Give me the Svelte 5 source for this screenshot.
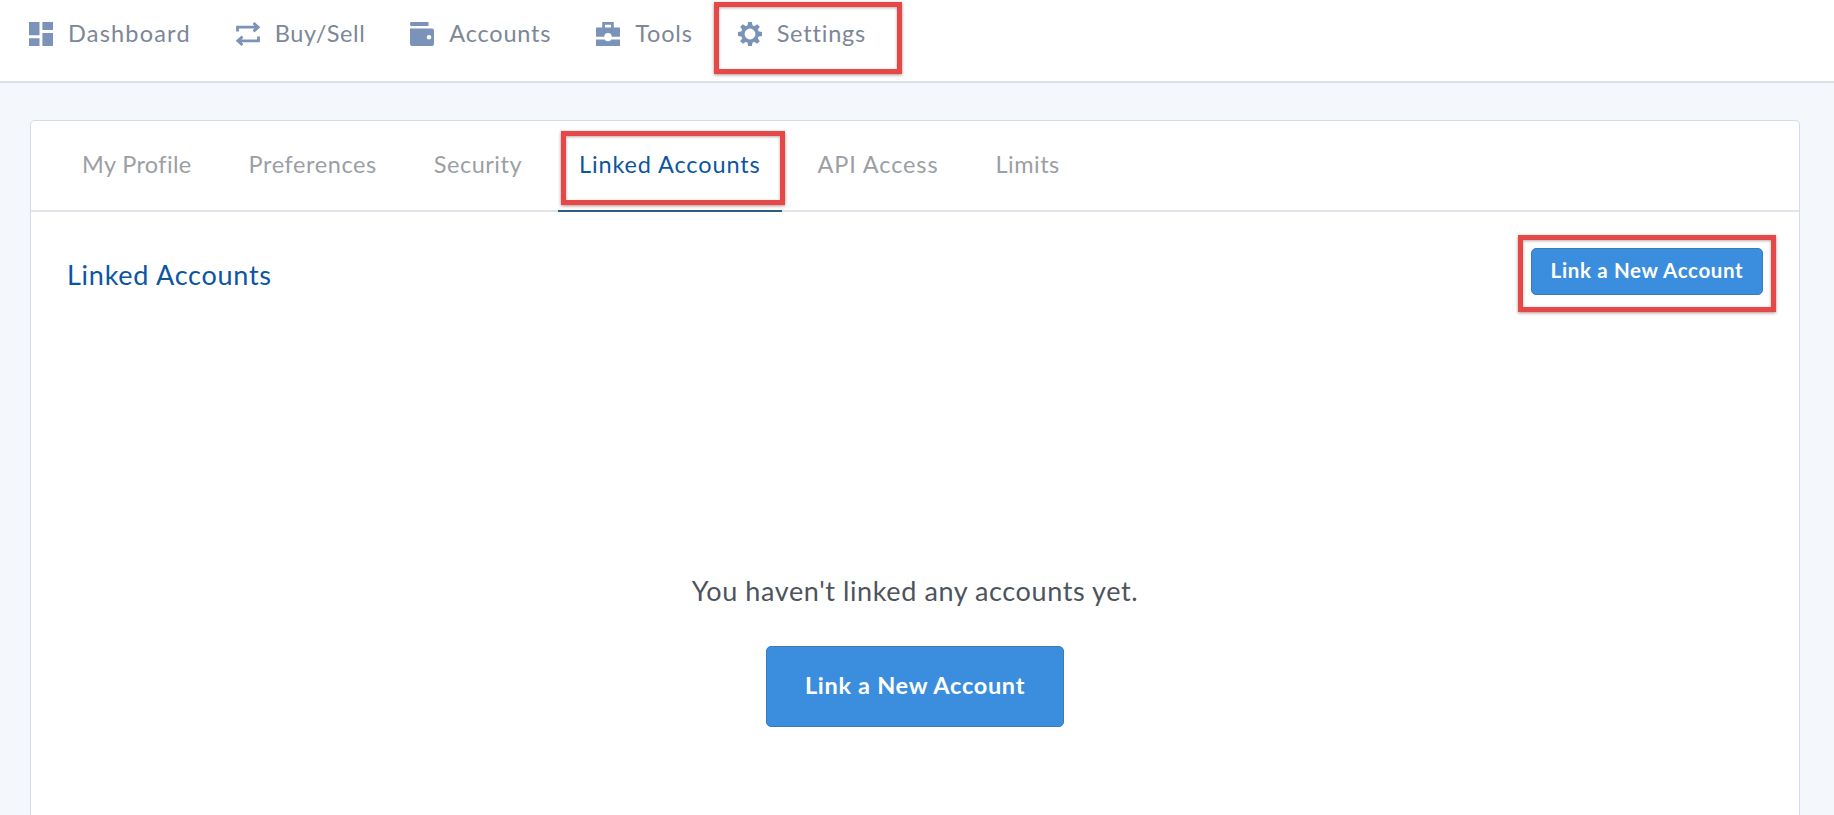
<script lang="ts">
  interface NavItem {
    id: string;
    label: string;
  }

  const navItems: NavItem[] = [
    { id: 'dashboard', label: 'Dashboard' },
    { id: 'trade', label: 'Buy/Sell' },
    { id: 'accounts', label: 'Accounts' },
    { id: 'tools', label: 'Tools' },
    { id: 'settings', label: 'Settings' }
  ];

  const tabs = ['My Profile', 'Preferences', 'Security', 'Linked Accounts', 'API Access', 'Limits'];

  // One gear tooth is drawn per angle
  const toothAngles = [0, 45, 90, 135, 180, 225, 270, 315];

  let activeTab = 'Linked Accounts';
</script>

<div class="page">
  <nav class="topbar">
    {#each navItems as item}
      <a class="nav-item {item.id}" href="#{item.id}">
        <svg class="nav-icon" viewBox="0 0 24 24" fill="currentColor">
          {#if item.id === 'dashboard'}
            <path d="M0 0h10.5v13.2H0zM13.4 0H24v8H13.4zM0 16.2h10.5V24H0zM13.4 11H24v13H13.4z" />
          {:else if item.id === 'trade'}
            <path
              d="M1.5 9.5V5.2H22M17.5 1l4.7 4.2-4.7 4.2M22.5 14.5v4.3H2M6.5 14.6l-4.7 4.2L6.5 23"
              fill="none"
              stroke="currentColor"
              stroke-width="2.8"
            />
          {:else if item.id === 'accounts'}
            <path d="M1 0h17.5v4H1q-1 0-1-2t1-2z" />
            <path
              fill-rule="evenodd"
              d="M0 6.6h22q2 0 2 2V22q0 2-2 2H2q-2 0-2-2zM19 13a2.3 2.3 0 1 0 0 4.6 2.3 2.3 0 0 0 0-4.6z"
            />
          {:else if item.id === 'tools'}
            <path
              fill-rule="evenodd"
              d="M6.2 0h11.6v5.6H24v9.2h-8.2a3.8 3.8 0 0 0-7.6 0H0V5.6h6.2zM9 2.8v2.8h6V2.8z"
            />
            <path d="M0 17.4h8.7a3.8 3.8 0 0 0 6.6 0H24V24H0z" />
          {:else}
            <circle cx="12" cy="12" r="7.2" fill="none" stroke="currentColor" stroke-width="3.6" />
            {#each toothAngles as angle}
              <path d="M9.3 4.5L10.1 0h3.8l.8 4.5z" transform="rotate({angle} 12 12)" />
            {/each}
          {/if}
        </svg>
        <span class="nav-label">{item.label}</span>
        {#if item.id === 'settings'}
          <span class="highlight highlight-nav"></span>
        {/if}
      </a>
    {/each}
  </nav>

  <main class="card">
    <div class="tabs">
      {#each tabs as tab}
        <button type="button" class="tab" class:active={tab === activeTab} on:click={() => (activeTab = tab)}>
          {tab}
          {#if tab === 'Linked Accounts'}
            <span class="highlight highlight-tab"></span>
          {/if}
        </button>
      {/each}
    </div>

    <header class="section-header">
      <h1>Linked Accounts</h1>
      <button type="button" class="btn btn-small">
        Link a New Account
        <span class="highlight highlight-btn"></span>
      </button>
    </header>

    <section class="empty-state">
      <p>You haven't linked any accounts yet.</p>
      <button type="button" class="btn btn-large">Link a New Account</button>
    </section>
  </main>
</div>

<style>
  :global(body) {
    margin: 0;
    background: #f4f7fc;
  }

  .page {
    height: 815px;
    display: flex;
    flex-direction: column;
    overflow: hidden;
    font-family: Lato, 'Open Sans', sans-serif;
  }

  .page * {
    box-sizing: border-box;
  }

  button {
    font-family: inherit;
    cursor: pointer;
  }

  /* Top navigation */
  .topbar {
    display: flex;
    flex-shrink: 0;
    gap: 45px;
    height: 83px;
    padding: 0 29px;
    background: #fff;
    border-bottom: 2px solid #dae1e9;
  }

  .nav-item {
    position: relative;
    display: flex;
    align-items: center;
    gap: 15px;
    height: 67px;
    color: #7c8798;
    font-size: 23.5px;
    letter-spacing: 0.8px;
    white-space: nowrap;
    text-decoration: none;
  }

  .nav-item.dashboard {
    letter-spacing: 1.2px;
  }

  .nav-item.trade {
    letter-spacing: 0.55px;
  }

  .nav-label {
    padding-bottom: 2px;
  }

  .nav-icon {
    width: 24px;
    height: 24px;
    flex-shrink: 0;
    color: #7b93b8;
  }

  /* Card and tabs */
  .card {
    display: flex;
    flex-direction: column;
    flex: 1;
    margin: 37px 34px 0 30px;
    background: #fff;
    border: 1px solid #d3dce7;
    border-bottom: none;
    border-radius: 5px 5px 0 0;
  }

  .tabs {
    display: flex;
    gap: 15px;
    height: 91px;
    padding-left: 30px;
    border-bottom: 2px solid #e1e4e8;
  }

  .tab {
    position: relative;
    height: 91px;
    padding: 0 21px 3px;
    border: none;
    border-bottom: 2px solid transparent;
    background: none;
    color: #9b9fa4;
    font-size: 23.5px;
    letter-spacing: 0.5px;
    white-space: nowrap;
  }

  .tab:first-child {
    letter-spacing: 0.36px;
  }

  .tab:nth-child(2) {
    letter-spacing: 0.6px;
  }

  .tab:nth-child(4),
  .tab:nth-child(5) {
    letter-spacing: 0.87px;
  }

  .tab.active {
    color: #0c569f;
    border-bottom-color: #2e5b80;
  }

  /* Content */
  .section-header {
    display: flex;
    justify-content: space-between;
    align-items: flex-start;
    padding: 36px 36px 0;
  }

  h1 {
    margin: 10px 0 0;
    color: #0c569f;
    font-size: 27px;
    font-weight: 400;
    line-height: 34px;
    letter-spacing: 0.75px;
  }

  .btn {
    position: relative;
    background: #3b8ede;
    border: 1px solid #3d7ab8;
    border-radius: 5px;
    color: #fff;
    font-weight: 700;
    white-space: nowrap;
  }

  .btn-small {
    width: 232px;
    height: 47px;
    padding: 0 0 3px;
    font-size: 20.5px;
    letter-spacing: 0.65px;
  }

  .btn-large {
    width: 298px;
    height: 81px;
    padding: 0 0 4px;
    font-size: 23.5px;
    letter-spacing: 0.7px;
  }

  .empty-state {
    display: flex;
    flex-direction: column;
    align-items: center;
    gap: 37px;
    margin-top: 278px;
  }

  .empty-state p {
    margin: 0;
    color: #4d545c;
    font-size: 27px;
    line-height: 36px;
    letter-spacing: 0.6px;
  }

  /* Red callout frames */
  .highlight {
    position: absolute;
    border: 5px solid #e64848;
    box-shadow: 0 1px 3px rgba(90, 40, 40, 0.5), inset 0 1px 3px rgba(90, 40, 40, 0.4);
    pointer-events: none;
  }

  .highlight-nav {
    top: 2px;
    left: -24px;
    width: 188px;
    height: 72px;
  }

  .highlight-tab {
    top: 10px;
    left: 3px;
    width: 224px;
    height: 74px;
  }

  .highlight-btn {
    top: -14px;
    right: -14px;
    width: 258px;
    height: 77px;
  }
</style>
